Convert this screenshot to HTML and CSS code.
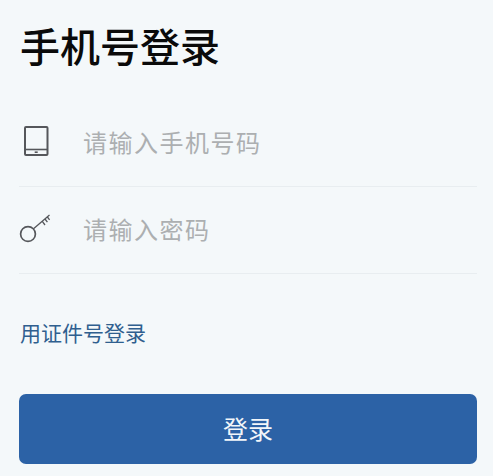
FILE: index.html
```html
<!DOCTYPE html>
<html lang="zh-CN">
<head>
<meta charset="utf-8">
<title>手机号登录</title>
<link rel="stylesheet" href="styles.css">
</head>
<body>
<main class="page">
  <h1 class="title">手机号登录</h1>
  <form class="form">
    <div class="field">
      <svg class="icon" viewBox="0 0 40 40" aria-hidden="true">
        <rect x="6" y="4" width="22.5" height="28" rx="1" fill="none" stroke="#55575b" stroke-width="2"/>
        <path d="M6 26.5H28.5" stroke="#55575b" stroke-width="1.6" fill="none"/>
        <path d="M15.7 29.2H18.7" stroke="#55575b" stroke-width="1.6" fill="none"/>
      </svg>
      <span class="placeholder">请输入手机号码</span>
    </div>
    <div class="field">
      <svg class="icon" viewBox="0 0 40 40" aria-hidden="true">
        <circle cx="9" cy="24" r="7.4" fill="none" stroke="#55575b" stroke-width="1.7"/>
        <path d="M14.5 18.8L30.5 5M23.3 11.3L26 15M26 9L28.4 12.2M28.4 7L30.6 9.8" fill="none" stroke="#55575b" stroke-width="1.3"/>
      </svg>
      <span class="placeholder">请输入密码</span>
    </div>
    <a class="link" href="#">用证件号登录</a>
    <button class="submit" type="button"><span class="submit-label">登录</span></button>
  </form>
</main>
</body>
</html>
```
FILE: styles.css
```css
html, body {
  margin: 0;
  padding: 0;
  background: #f4f8fa;
}
.page {
  box-sizing: border-box;
  width: 493px;
  height: 476px;
  overflow: hidden;
  padding: 18px 16px 0 19px;
  font-family: "Noto Sans CJK SC", "Noto Sans", sans-serif;
}
.title {
  margin: 0 0 0 1px;
  font-size: 40px;
  line-height: 54px;
  font-weight: 500;
  color: #0a0a0a;
}
.form {
  display: flex;
  flex-direction: column;
  margin-top: 28px;
}
.field {
  display: flex;
  align-items: center;
  height: 87px;
  border-bottom: 1px solid #e8edf0;
  box-sizing: border-box;
}
.icon {
  width: 40px;
  height: 40px;
  margin-right: 24px;
  flex: none;
}
.placeholder {
  padding-bottom: 3px;
  font-size: 24px;
  letter-spacing: 1.5px;
  color: #acafb1;
}
.link {
  margin: 42px 0 0 1px;
  font-size: 21px;
  line-height: 32px;
  color: #2f5f8f;
  text-decoration: none;
}
.submit {
  margin-top: 46px;
  height: 70px;
  border: 0;
  border-radius: 7px;
  background: #2c62a6;
  color: #f2f6fa;
  font-family: inherit;
  font-size: 25px;
  padding: 0;
}
.submit-label {
  display: block;
  padding-bottom: 3px;
}
```
